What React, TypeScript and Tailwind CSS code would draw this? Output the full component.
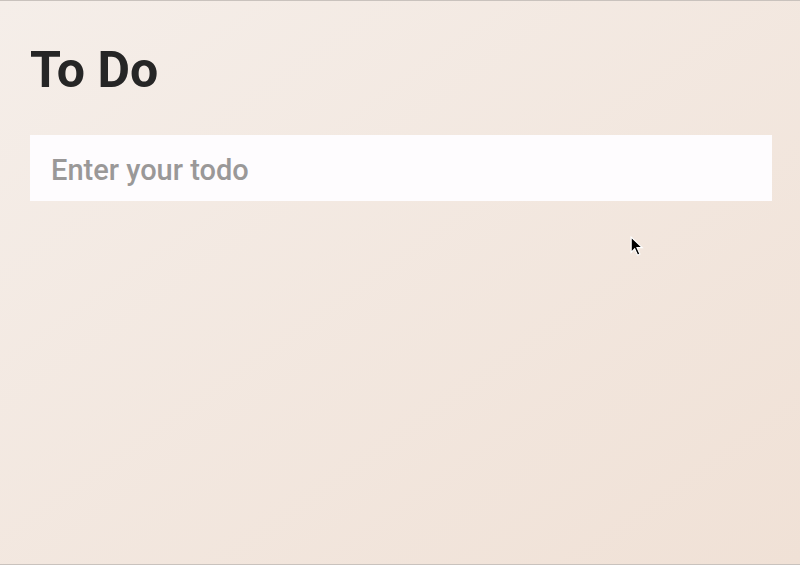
export default function App() {
  return (
    <div
      className="relative h-[565px] w-[800px] overflow-hidden border-y border-[#c9c2bd] bg-gradient-to-br from-[#f5eee9] to-[#f0e1d6] pl-[30px] pr-[28px]"
      style={{ fontFamily: "Roboto, 'Liberation Sans', sans-serif" }}
    >
      <h1 className="pt-[39px] text-[50px] font-bold leading-[60px] tracking-[0px] text-[#262626]">
        To Do
      </h1>
      <input
        type="text"
        placeholder="Enter your todo"
        className="mt-[35px] h-[66px] w-full bg-[#fefcfe] px-[21px] pt-[3px] text-[29px] font-medium text-[#333] outline-none placeholder:text-[#9a9898]"
      />
      <svg
        className="absolute left-[630px] top-[235px]"
        width="14"
        height="21"
        viewBox="0 0 12 18"
      >
        <path
          d="M1 1 L1 14 L4 11 L6.5 16.5 L8.5 15.5 L6 10 L10.5 10 Z"
          fill="#000"
          stroke="#fff"
          strokeWidth="1"
        />
      </svg>
    </div>
  );
}
